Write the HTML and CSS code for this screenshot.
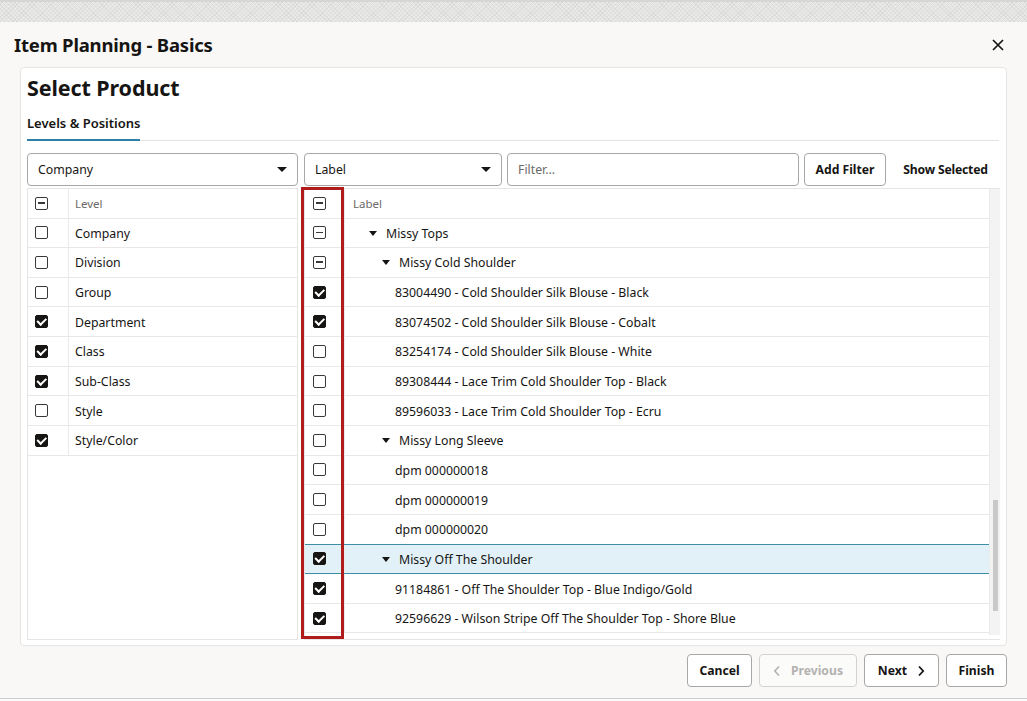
FILE: index.html
```html
<!DOCTYPE html>
<html>
<head>
<meta charset="utf-8">
<link rel="stylesheet" href="styles.css">
</head>
<body>
<div class="topband"></div>
<div class="dialog">
  <div class="dlg-head">
    <h1 class="dlg-title">Item Planning - Basics</h1>
    <button class="close" aria-label="Close">
      <svg width="12" height="12" viewBox="0 0 12 12"><path d="M1 1L11 11M11 1L1 11" stroke="#161513" stroke-width="1.7" fill="none"/></svg>
    </button>
  </div>
  <div class="card">
    <h2 class="card-title">Select Product</h2>
    <div class="tabs"><span class="tab active">Levels &amp; Positions</span></div>
    <div class="controls">
      <div class="select sel-company"><span>Company</span><i class="caret"></i></div>
      <div class="select sel-label"><span>Label</span><i class="caret"></i></div>
      <div class="filter"><span>Filter...</span></div>
      <button class="btn">Add Filter</button>
      <button class="btn-flat">Show Selected</button>
    </div>
    <div class="tables">
      <div class="tbl left">
        <div class="row head"><div class="cc"><i class="cb ind"></i></div><div class="lc">Level</div></div>
        <div class="row"><div class="cc"><i class="cb"></i></div><div class="lc">Company</div></div>
        <div class="row"><div class="cc"><i class="cb"></i></div><div class="lc">Division</div></div>
        <div class="row"><div class="cc"><i class="cb"></i></div><div class="lc">Group</div></div>
        <div class="row"><div class="cc"><i class="cb on"></i></div><div class="lc">Department</div></div>
        <div class="row"><div class="cc"><i class="cb on"></i></div><div class="lc">Class</div></div>
        <div class="row"><div class="cc"><i class="cb on"></i></div><div class="lc">Sub-Class</div></div>
        <div class="row"><div class="cc"><i class="cb"></i></div><div class="lc">Style</div></div>
        <div class="row"><div class="cc"><i class="cb on"></i></div><div class="lc">Style/Color</div></div>
      </div>
      <div class="tbl right">
        <div class="rows">
          <div class="row head"><div class="cc"><i class="cb ind"></i></div><div class="lc">Label</div></div>
          <div class="row"><div class="cc"><i class="cb ind"></i></div><div class="lc l1"><i class="tri"></i>Missy Tops</div></div>
          <div class="row"><div class="cc"><i class="cb ind"></i></div><div class="lc l2"><i class="tri"></i>Missy Cold Shoulder</div></div>
          <div class="row"><div class="cc"><i class="cb on"></i></div><div class="lc l3">83004490 - Cold Shoulder Silk Blouse - Black</div></div>
          <div class="row"><div class="cc"><i class="cb on"></i></div><div class="lc l3">83074502 - Cold Shoulder Silk Blouse - Cobalt</div></div>
          <div class="row"><div class="cc"><i class="cb"></i></div><div class="lc l3">83254174 - Cold Shoulder Silk Blouse - White</div></div>
          <div class="row"><div class="cc"><i class="cb"></i></div><div class="lc l3">89308444 - Lace Trim Cold Shoulder Top - Black</div></div>
          <div class="row"><div class="cc"><i class="cb"></i></div><div class="lc l3">89596033 - Lace Trim Cold Shoulder Top - Ecru</div></div>
          <div class="row"><div class="cc"><i class="cb"></i></div><div class="lc l2"><i class="tri"></i>Missy Long Sleeve</div></div>
          <div class="row"><div class="cc"><i class="cb"></i></div><div class="lc l3">dpm 000000018</div></div>
          <div class="row"><div class="cc"><i class="cb"></i></div><div class="lc l3">dpm 000000019</div></div>
          <div class="row"><div class="cc"><i class="cb"></i></div><div class="lc l3">dpm 000000020</div></div>
          <div class="row sel"><div class="cc"><i class="cb on"></i></div><div class="lc l2"><i class="tri"></i>Missy Off The Shoulder</div></div>
          <div class="row"><div class="cc"><i class="cb on"></i></div><div class="lc l3">91184861 - Off The Shoulder Top - Blue Indigo/Gold</div></div>
          <div class="row"><div class="cc"><i class="cb on"></i></div><div class="lc l3">92596629 - Wilson Stripe Off The Shoulder Top - Shore Blue</div></div>
        </div>
        <div class="vscroll"><div class="thumb"></div></div>
        <div class="redbox"></div>
      </div>
    </div>
  </div>
  <div class="footer">
    <button class="btn">Cancel</button>
    <button class="btn disabled"><svg width="8" height="12" viewBox="0 0 8 12"><path d="M6 1.5L1.8 6L6 10.5" stroke="currentColor" stroke-width="1.6" fill="none"/></svg>Previous</button>
    <button class="btn">Next<svg class="after" width="8" height="12" viewBox="0 0 8 12"><path d="M2 1.5L6.2 6L2 10.5" stroke="currentColor" stroke-width="1.8" fill="none"/></svg></button>
    <button class="btn">Finish</button>
  </div>
</div>
</body>
</html>
```
FILE: styles.css
```css
* { box-sizing: border-box; }
html, body { margin: 0; padding: 0; }
body {
  width: 1027px;
  height: 701px;
  overflow: hidden;
  background: #fbfbfb;
  font-family: "Noto Sans", "Open Sans", sans-serif;
  color: #161513;
}
.topband {
  height: 22px;
  background:
    repeating-linear-gradient(45deg, rgba(0,0,0,0.04) 0 1px, transparent 1px 3px),
    repeating-linear-gradient(-45deg, rgba(0,0,0,0.04) 0 1px, transparent 1px 3px),
    #e9e9e8;
  border-top: 2px solid #d6d6d6;
}
.dialog {
  height: 677px;
  background: #f9f8f6;
  border-bottom: 1px solid #cfcfcf;
  display: flex;
  flex-direction: column;
}
.dlg-head {
  height: 45px;
  display: flex;
  align-items: center;
  justify-content: space-between;
  padding: 0 23px 0 14px;
}
.dlg-title {
  margin: 0;
  font-size: 18.5px;
  font-weight: 700;
  letter-spacing: -0.2px;
}
.close {
  border: 0;
  background: none;
  padding: 0;
  width: 12px;
  height: 12px;
  display: flex;
}
.card {
  margin: 0 20px;
  height: 579px;
  background: #fff;
  border: 1px solid #e6e5e3;
  border-radius: 4px;
  padding: 0 6px;
  display: flex;
  flex-direction: column;
}
.card-title {
  margin: 5px 0 0 0;
  height: 30px;
  line-height: 30px;
  font-size: 21.5px;
  font-weight: 700;
  letter-spacing: -0.1px;
}
.tabs {
  margin-top: 4px;
  height: 34px;
  border-bottom: 1px solid #e3e2e0;
  margin-right: 1px;
  display: flex;
}
.tab {
  font-size: 13px;
  font-weight: 600;
  line-height: 32px;
  border-bottom: 2px solid #2e7fa6;
  height: 34px;
  margin-bottom: -1px;
}
.controls {
  margin-top: 12px;
  height: 33px;
  display: flex;
  gap: 5px;
  font-size: 12.3px;
}
.select, .filter {
  height: 33px;
  border: 1px solid #a8a7a5;
  border-radius: 4px;
  background: #fff;
  display: flex;
  align-items: center;
  padding: 0 10px;
  justify-content: space-between;
}
.sel-company { width: 271px; margin-right: 1px; }
.sel-label { width: 198px; }
.filter { width: 292px; color: #6b6a68; }
.caret {
  width: 0; height: 0;
  border-left: 5px solid transparent;
  border-right: 5px solid transparent;
  border-top: 5px solid #161513;
  margin-right: 0;
}
.btn {
  height: 33px;
  border: 1px solid #a8a7a5;
  border-radius: 4px;
  background: #fff;
  font-family: inherit;
  font-size: 12.2px;
  font-weight: 700;
  color: #161513;
  padding: 0 12px;
  display: inline-flex;
  align-items: center;
  gap: 10px;
}
.controls .btn { width: 82px; justify-content: center; padding: 0; }
.btn-flat {
  flex: 1;
  border: 0;
  background: none;
  font-family: inherit;
  font-size: 12.2px;
  font-weight: 700;
  letter-spacing: -0.2px;
  color: #161513;
  padding: 0;
  text-align: center;
  height: 33px;
}
.tables {
  margin-top: 2px;
  height: 452px;
  display: flex;
  gap: 6px;
  font-size: 12.3px;
}
.tbl {
  border: 1px solid #e6e5e3;
  height: 452px;
}
.tbl.left { width: 271px; }
.tbl.right {
  width: 696px;
  position: relative;
  display: flex;
  border-right: 0;
}
.rows { flex: 1; }
.row {
  display: flex;
  height: 29.65px;
  border-bottom: 1px solid #e9e8e6;
  align-items: stretch;
}
.row.head { height: 29.5px; color: #6b6a68; font-size: 11.5px; }
.left .cc { width: 41px; border-right: 1px solid #ebeae8; padding-left: 7px; }
.right .cc { width: 40px; border-right: 1px solid #ebeae8; padding-left: 8px; }
.cc { display: flex; align-items: center; justify-content: flex-start; }
.lc {
  flex: 1;
  display: flex;
  align-items: center;
  padding-left: 6px;
  padding-top: 1px;
  white-space: nowrap;
}
.right .lc { padding-left: 8px; }
.right .lc.l1 { padding-left: 24px; }
.right .lc.l2 { padding-left: 37px; }
.right .lc.l3 { padding-left: 50px; }
.tri {
  width: 0; height: 0;
  border-left: 4px solid transparent;
  border-right: 4px solid transparent;
  border-top: 5px solid #161513;
  margin-right: 9px;
}
.row.sel {
  background: #e1f1f7;
  border-top: 1px solid #3d8ea6;
  border-bottom: 1px solid #3d8ea6;
  margin-top: -1px;
  height: 30.65px;
}
.cb {
  width: 13px;
  height: 13px;
  border: 1.5px solid #3a3937;
  border-radius: 2px;
  position: relative;
  background: #fff;
}
.cb.on {
  background: #161513;
  border-color: #161513;
}
.cb.on::after {
  content: "";
  position: absolute;
  left: 2.5px;
  top: 0px;
  width: 3.5px;
  height: 6.5px;
  border-right: 2px solid #fff;
  border-bottom: 2px solid #fff;
  transform: rotate(45deg);
}
.cb.ind::after {
  content: "";
  position: absolute;
  left: 2px;
  right: 2px;
  top: 4.3px;
  height: 1.5px;
  background: #3a3937;
}
.vscroll {
  width: 11px;
  background: #f3f3f3;
  height: 446px;
  padding: 311px 2px 0 3px;
  border-left: 1px solid #ebeae8;
}
.thumb {
  height: 111px;
  background: #c9c9c9;
}
.redbox {
  position: absolute;
  left: -4px;
  top: -2px;
  width: 43px;
  height: 452px;
  border: 3px solid #b01b1b;
  pointer-events: none;
}
.footer {
  display: flex;
  justify-content: flex-end;
  gap: 7px;
  padding: 8px 20px 0 0;
}
.footer .btn:nth-child(1) { width: 65px; justify-content: center; }
.footer .btn:nth-child(2) { width: 98px; justify-content: center; }
.footer .btn:nth-child(3) { width: 75px; justify-content: center; }
.footer .btn:nth-child(4) { width: 61px; justify-content: center; }
.btn.disabled {
  color: #b3b2b0;
  border-color: #d3d2d0;
  background: #fbfbfa;
}
```
